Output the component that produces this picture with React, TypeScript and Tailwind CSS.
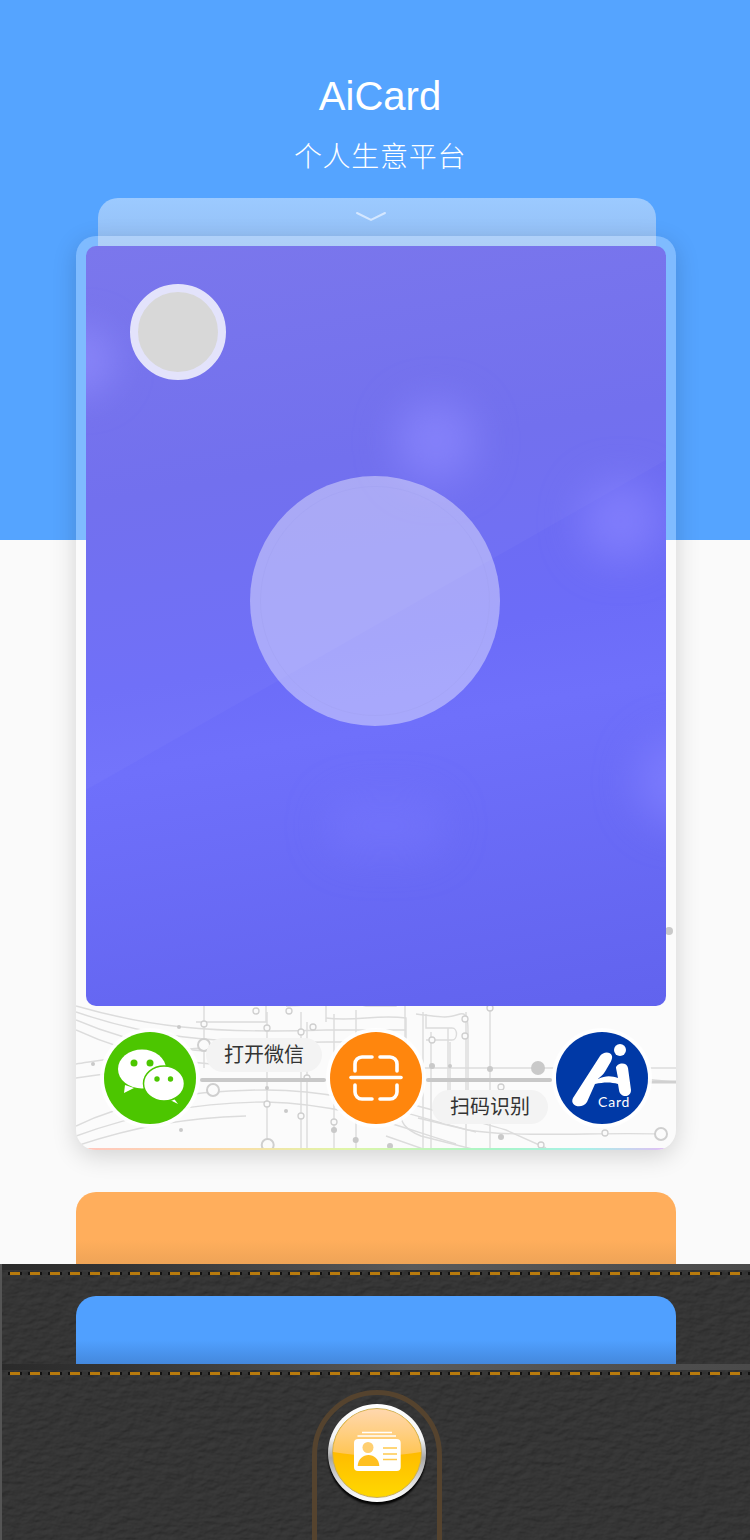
const cjk = { fontFamily: '"Liberation Sans", "Noto Sans CJK SC", sans-serif' }

// circuit board lines behind the lower card area, coordinates are inside the 600x228 drawing
const traces = [
  'M0 84 C70 104 130 112 250 108 H330',
  'M0 90 C70 114 130 122 250 120 H320',
  'M0 98 C60 124 120 134 240 132',
  'M0 108 C60 136 120 146 220 144',
  'M0 142 C40 136 90 128 128 126',
  'M0 156 C40 150 80 146 120 146',
  'M0 204 C50 180 110 168 190 168 C270 168 320 190 400 210',
  'M0 214 C60 192 120 180 190 180 C270 182 320 204 380 222',
  'M0 224 C60 204 110 196 170 194',
  'M120 100 H190 V76 H250 V100',
  'M210 84 C240 84 260 76 290 84 H320 V70',
  'M250 96 C280 100 300 92 330 96 V134',
  'M300 172 C330 182 390 196 430 208 L470 226',
  'M330 146 H470',
  'M340 92 C370 96 372 96 384 92 C392 90 392 100 392 110 V170',
  'M350 118 H376 C382 118 382 106 376 106 H350 V92',
  'M372 106 V170 C372 178 380 180 388 184',
  'M342 196 L392 208 C440 216 520 210 585 212',
  'M326 186 C322 200 330 208 345 214 L400 228',
  'M310 214 L350 228',
  'M128 84 V146',
  'M191 90 V228',
  'M225 90 V228',
  'M258 92 V228',
  'M280 88 V228',
  'M231 100 V228',
  'M329 80 V160',
  'M355 110 V228',
  'M347 90 V228',
  'M374 120 V190',
  'M390 90 V228',
  'M414 80 V228',
  'M470 146 H600',
  'M500 146 C530 150 560 158 600 160',
]
const rings = [
  [180, 89, 3], [213, 89, 3], [237, 105, 3], [225, 110, 3], [191, 106, 3], [128, 102, 3], [128, 123, 6], [137, 168, 6], [191.7, 223, 6],
  [225, 194, 3], [191, 182, 3], [258, 200, 3], [414, 86, 3], [389, 114, 3], [389, 97, 3], [356, 118, 3], [425, 165, 3], [529, 211, 3],
  [585, 212, 6], [465, 223, 3], [231, 156, 3],
]
const dots = [
  [103, 105, 2], [17, 142, 2], [105, 208, 2], [210, 189, 2], [191, 166, 2], [258, 208, 3], [279.7, 218, 3], [356, 144, 3], [414, 147, 3],
  [462, 146, 7], [425, 215, 3], [314, 224, 3], [593, 9, 4], [374, 144, 2],
]

function CircuitBackdrop() {
  return (
    <svg className="absolute bottom-0 left-0 h-[228px] w-[600px]" viewBox="0 0 600 228" fill="none" aria-hidden>
      <g stroke="#dcdcdc" strokeWidth="1.4">
        {traces.map((d) => (
          <path key={d} d={d} />
        ))}
        <path d="M572 160 H600" stroke="#d0d0d0" strokeWidth="3" />
      </g>
      <g stroke="#cfcfcf" fill="#fbfbfb">
        {rings.map(([x, y, r]) => (
          <circle key={`${x}-${y}`} cx={x} cy={y} r={r} strokeWidth={r > 4 ? 2 : 1.3} />
        ))}
      </g>
      <g fill="#c9c9c9">
        {dots.map(([x, y, r]) => (
          <circle key={`${x}-${y}`} cx={x} cy={y} r={r} />
        ))}
      </g>
    </svg>
  )
}

function WechatIcon() {
  return (
    <svg className="h-[92px] w-[92px]" viewBox="0 0 92 92">
      <path d="M21 53 L20 61 L30 56 Z" fill="#fff" />
      <ellipse cx="38" cy="37" rx="24" ry="19.5" fill="#fff" />
      <circle cx="30" cy="31" r="3.5" fill="#4cc600" />
      <circle cx="46" cy="31" r="3.5" fill="#4cc600" />
      <path d="M68 64 L74 72 L64 67 Z" fill="#fff" />
      <ellipse cx="60" cy="51.5" rx="20.5" ry="17.5" fill="#fff" stroke="#4cc600" strokeWidth="1.5" />
      <circle cx="53" cy="47" r="2.7" fill="#4cc600" />
      <circle cx="66.5" cy="47" r="2.7" fill="#4cc600" />
    </svg>
  )
}

function ScanIcon() {
  return (
    <svg className="h-[92px] w-[92px]" viewBox="0 0 92 92" fill="none" stroke="#fff" strokeWidth="3.6" strokeLinecap="round">
      <path d="M42 25 H32 a7 7 0 0 0 -7 7 V39" />
      <path d="M50 25 H60 a7 7 0 0 1 7 7 V39" />
      <path d="M25 53 V60 a7 7 0 0 0 7 7 H42" />
      <path d="M67 53 V60 a7 7 0 0 1 -7 7 H50" />
      <path d="M21 45.5 H71" />
    </svg>
  )
}

function AiLogo() {
  return (
    <div className="relative h-[92px] w-[92px]">
      <svg className="h-[92px] w-[92px]" viewBox="0 0 92 92" fill="#fff">
        <path d="M17 66 L44 24 C47 20 54 19 56 24 C57 28 52 34 50 38 C47 44 41 47 42 47 C50 43 56 44 62 46 L60 36 C60 31 71 29 72 36 L75 58 C75 66 64 66 63 58 L62 52 C55 50 48 50 39 52 L31 70 C26 78 13 74 17 66 Z" />
        <circle cx="64" cy="18" r="6" />
      </svg>
      <span className="absolute left-[42px] top-[62px] font-['Lato',sans-serif] text-[14px] leading-[16px] tracking-[0.8px] text-white">
        Card
      </span>
    </div>
  )
}

function ActionCircle({ fill, children }: { fill: string; children: React.ReactNode }) {
  return (
    <div className="flex h-[100px] w-[100px] shrink-0 items-center justify-center rounded-full bg-white/90">
      <div className={`h-[92px] w-[92px] overflow-hidden rounded-full ${fill}`}>{children}</div>
    </div>
  )
}

function Leather({ id }: { id: string }) {
  return (
    <svg className="absolute inset-0 h-full w-full" aria-hidden>
      <filter id={id} x="0" y="0" width="100%" height="100%" colorInterpolationFilters="sRGB">
        <feTurbulence type="fractalNoise" baseFrequency="0.09 0.16" numOctaves="4" seed="11" />
        <feDiffuseLighting surfaceScale="0.9" lightingColor="#3c3c3c" diffuseConstant="1">
          <feDistantLight azimuth="235" elevation="62" />
        </feDiffuseLighting>
      </filter>
      <rect width="100%" height="100%" filter={`url(#${id})`} />
    </svg>
  )
}

function Stitching() {
  return (
    <div className="relative h-[3px] w-full bg-[repeating-linear-gradient(90deg,#111_0px,#111_2px,#b87a0c_2px,#b87a0c_12px,#111_12px,#111_14px,transparent_14px,transparent_20px)]" />
  )
}

function PocketEdge() {
  return (
    <div className="relative">
      <div className="h-[6px] bg-[linear-gradient(90deg,#2a2a2a_0%,#333_15%,#5a5a5a_55%,#4a4a4a_100%)]" />
      <div className="ml-[6px] mt-[2px]">
        <Stitching />
      </div>
    </div>
  )
}

function Connector({ label, below }: { label: string; below?: boolean }) {
  return (
    <div className="relative mt-[4px] h-[4px] flex-1 rounded-full bg-[#c8c8c8]">
      <span
        className={`absolute flex h-[34px] w-[116px] items-center justify-center rounded-full bg-[#f3f3f3] text-[20px] text-[#333] ${below ? 'left-[6px] top-[12px]' : 'left-[6px] -top-[40px]'}`}
        style={cjk}
      >
        {label}
      </span>
    </div>
  )
}

export default function App() {
  return (
    <div className="relative h-[1540px] w-[750px] overflow-hidden bg-[#fafafa]" style={cjk}>
      <header className="h-[540px] bg-[#55a4ff] pl-[10px] pt-[73px] text-center text-white">
        <h1 className="text-[40px] font-normal leading-[46px]">AiCard</h1>
        <p className="mt-[19px] text-[28px] font-light leading-[40px] tracking-[0.7px]">个人生意平台</p>
      </header>

      <main className="relative -mt-[342px]">
        <div className="ml-[98px] flex h-[48px] w-[558px] justify-center rounded-t-[20px] bg-[linear-gradient(180deg,#9ccaff,#93bff5)] pr-[12px] pt-[13px]">
          <svg className="h-[12px] w-[32px]" viewBox="0 0 32 12" fill="none" stroke="#d4e7ff" strokeWidth="2" strokeLinecap="round">
            <path d="M2 2 L16 9 L30 2" />
          </svg>
        </div>

        {/* main card */}
        <div className="relative -mt-[10px] ml-[76px] h-[914px] w-[600px] overflow-hidden rounded-[20px] bg-white/25 px-[10px] pt-[10px] shadow-[0_6px_24px_rgba(0,0,0,0.16)]">
          <CircuitBackdrop />

          <div className="relative h-[760px] overflow-hidden rounded-[10px] bg-[linear-gradient(170deg,#7773ec_0%,#6e6cee_30%,#6c6cf8_52%,#6f70fb_62%,#6163ee_100%)]">
            <svg className="absolute inset-0 h-full w-full" viewBox="0 0 580 760" aria-hidden>
              <path d="M0 0 H580 V214 L0 544 Z" fill="#fff" fillOpacity="0.03" />
            </svg>
            <div className="absolute -left-[40px] top-[80px] h-[70px] w-[70px] rounded-full bg-[#938fff]/60 blur-[18px]" />
            <div className="absolute left-[310px] top-[155px] h-[80px] w-[80px] rounded-full bg-[#8d89ff]/70 blur-[20px]" />
            <div className="absolute left-[495px] top-[235px] h-[80px] w-[80px] rounded-full bg-[#8985ff]/70 blur-[20px]" />
            <div className="absolute left-[550px] top-[490px] h-[90px] w-[90px] rounded-full bg-[#8180ff]/70 blur-[20px]" />
            <div className="absolute left-[240px] top-[550px] h-[60px] w-[120px] rounded-full bg-[#7b7bff]/40 blur-[20px]" />

            <div className="relative pl-[44px] pt-[38px]">
              <div className="h-[96px] w-[96px] rounded-full border-[8px] border-[#e3e3fb] bg-[#d8d8d8]" />
            </div>
            <div className="relative ml-[164px] mt-[96px] flex h-[250px] w-[250px] items-center justify-center rounded-full bg-white/40">
              <div className="h-[230px] w-[230px] rounded-full border border-[#9f9ff0]/40" />
            </div>
          </div>

          <div className="relative flex items-center pl-[14px] pr-[14px] pt-[22px]">
            <ActionCircle fill="bg-[#4cc600]">
              <WechatIcon />
            </ActionCircle>
            <Connector label="打开微信" />
            <ActionCircle fill="bg-[#ff860d]">
              <ScanIcon />
            </ActionCircle>
            <Connector label="扫码识别" below />
            <ActionCircle fill="bg-[#0039a6]">
              <AiLogo />
            </ActionCircle>
          </div>

          <div className="absolute bottom-0 left-0 h-[2px] w-full bg-[linear-gradient(90deg,#ffc6c0,#fbdca8_25%,#dff5a8_45%,#a8f5c8_70%,#a8f0e8_85%,#e8b8f5)]" />
        </div>

        <div className="relative ml-[76px] mt-[42px] h-[80px] w-[600px] rounded-t-[20px] bg-[linear-gradient(180deg,#ffae5c_0%,#ffae5c_60%,#e9a055_100%)]" />

        {/* first pocket */}
        <section className="relative -mt-[8px] h-[100px] overflow-hidden border-l-2 border-[#555] bg-[#333]">
          <Leather id="leather-a" />
          <PocketEdge />
          <div className="relative ml-[74px] mt-[21px] h-[68px] w-[600px] rounded-t-[20px] bg-[linear-gradient(180deg,#50a0ff_0%,#50a0ff_65%,#4488dd_100%)]" />
        </section>

        {/* second pocket */}
        <section className="relative h-[176px] overflow-hidden border-l-2 border-[#555] bg-[#333]">
          <Leather id="leather-b" />
          <PocketEdge />
          <div className="relative ml-[310px] mt-[15px] flex h-[200px] w-[130px] justify-center rounded-t-[65px] border-[5px] border-[#55432e] pt-[9px]">
            <div className="h-[98px] w-[98px] rounded-full bg-[linear-gradient(180deg,#fff_0%,#f4f4f4_35%,#a8a8a8_55%,#e8e8e8_85%,#fff_100%)] p-[4px] shadow-[0_3px_2px_rgba(0,0,0,0.9)]">
              <div className="relative h-[90px] w-[90px] overflow-hidden rounded-full border border-[#c8ae60] bg-[linear-gradient(180deg,#ffbc00_50%,#ffd800_100%)]">
                <svg className="absolute -left-[5px] -top-[5px] h-[98px] w-[98px]" viewBox="0 0 98 98">
                  <defs>
                    <linearGradient id="gloss" x1="0" y1="0" x2="0" y2="1">
                      <stop offset="0" stopColor="#ffd9b8" />
                      <stop offset="0.55" stopColor="#ffcf82" />
                      <stop offset="1" stopColor="#ffc552" />
                    </linearGradient>
                  </defs>
                  <path d="M0 0 H98 V47 C70 53 28 53 0 47 Z" fill="url(#gloss)" />
                  <path d="M34 28.5 H64" stroke="#fff" strokeWidth="1.4" />
                  <path d="M29.5 32 H68" stroke="#fff" strokeWidth="1.6" />
                  <rect x="26" y="35" width="46.7" height="32" rx="4" fill="#fff" />
                  <circle cx="40" cy="43.5" r="5.5" fill="#ffcf70" />
                  <path d="M29.7 62 C30 55 35 51 40.5 51 C46 51 51 55 51.3 62 Z" fill="#ffc020" />
                  <path d="M55 44 H69 M55 50 H69 M55 55.5 H69" stroke="#ffc94d" strokeWidth="1.6" />
                </svg>
              </div>
            </div>
          </div>
        </section>
      </main>
    </div>
  )
}
